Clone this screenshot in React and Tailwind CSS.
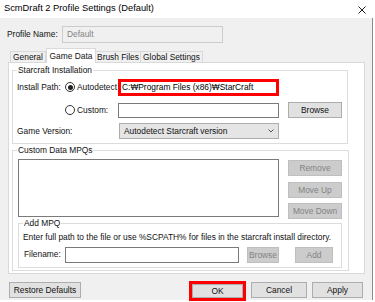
import React from 'react';

const Btn = ({ children, className = '', disabled }) => (
  <div
    className={`flex items-center justify-center h-[16px] border whitespace-nowrap ${
      disabled ? 'bg-[#cccccc] border-[#bfbfbf] text-[#838383]' : 'bg-[#e1e1e1] border-[#adadad]'
    } ${className}`}
  >
    {children}
  </div>
);

const Radio = ({ checked }) => (
  <span className="w-[10px] h-[10px] rounded-full border border-[#333] bg-white flex items-center justify-center shrink-0">
    {checked && <span className="w-[5px] h-[5px] rounded-full bg-[#222]" />}
  </span>
);

const Group = ({ label, className = '', children }) => (
  <fieldset className={`border border-[#dcdcdc] ${className}`}>
    <legend className="ml-[4px] px-[1px] leading-[12px]">{label}</legend>
    {children}
  </fieldset>
);

export default function App() {
  return (
    <div className="w-[375px] h-[302px] bg-white overflow-hidden whitespace-nowrap font-['Liberation_Sans',Arial,sans-serif] text-[8.4px] text-[#111]">
      {/* title bar */}
      <div className="h-[18px] flex items-center justify-between pl-[4px] pr-[9px]">
        <span className="text-[9.3px] text-black">ScmDraft 2 Profile Settings (Default)</span>
        <svg width="8" height="8" viewBox="0 0 8 8" className="mt-[2px]">
          <path d="M0.5 0.5L7.5 7.5M7.5 0.5L0.5 7.5" stroke="#222" strokeWidth="1" />
        </svg>
      </div>

      <div className="w-[373px] h-[282px] bg-[#f0f0f0] border-r border-[#8c8c8c] pt-[8px]">
        {/* profile name */}
        <div className="flex items-center h-[17px] pl-[7px]">
          <span className="w-[55px]">Profile Name:</span>
          <div className="w-[161px] h-[17px] border border-[#cccccc] bg-[#f0f0f0] text-[#838383] flex items-center pl-[4px]">
            Default
          </div>
        </div>

        {/* tabs */}
        <div className="flex items-end h-[14px] mt-[5px] pl-[10px]">
          <div className="w-[36px] h-[11px] border border-b-0 border-[#d9d9d9] bg-[#f0f0f0] flex items-center justify-center">General</div>
          <div className="relative z-10 w-[50px] h-[15px] -mb-px border border-b-0 border-[#d9d9d9] bg-white flex items-start justify-center pt-[1px]">Game Data</div>
          <div className="w-[45px] h-[11px] border border-b-0 border-l-0 border-[#d9d9d9] bg-[#f0f0f0] flex items-center justify-center">Brush Files</div>
          <div className="w-[62px] h-[11px] border border-b-0 border-l-0 border-[#d9d9d9] bg-[#f0f0f0] flex items-center justify-center">Global Settings</div>
        </div>

        {/* tab panel */}
        <div className="ml-[8px] w-[357px] h-[212px] border border-[#d9d9d9] bg-white pl-[3px]">
          <Group label="Starcraft Installation" className="w-[336px] h-[80px] mt-[1px]">
            <div className="flex items-center h-[17px] mt-[3px]">
              <span className="w-[52px] pl-[4px]">Install Path:</span>
              <span className="w-[53px] flex items-center gap-[2px]">
                <Radio checked />
                Autodetect
              </span>
              <div className="w-[161px] h-[17px] border-[3px] border-[#ff0000] flex items-center pl-[1px] text-black">
                C:₩Program Files (x86)₩StarCraft
              </div>
            </div>
            <div className="flex items-center h-[16px] mt-[6px]">
              <span className="w-[52px]" />
              <span className="w-[53px] flex items-center gap-[2px]">
                <Radio />
                Custom:
              </span>
              <div className="w-[161px] h-[15px] border border-[#7a7a7a] bg-white" />
              <Btn className="ml-[9px] w-[54px]">Browse</Btn>
            </div>
            <div className="flex items-center h-[16px] mt-[5px]">
              <span className="w-[106px] pl-[4px]">Game Version:</span>
              <div className="w-[160px] h-[16px] border border-[#adadad] bg-[#e5e5e5] flex items-center justify-between pl-[4px] pr-[4px]">
                Autodetect Starcraft version
                <svg width="6" height="4" viewBox="0 0 6 4">
                  <path d="M0.5 0.5L3 3L5.5 0.5" fill="none" stroke="#555" strokeWidth="1" />
                </svg>
              </div>
            </div>
          </Group>

          <Group label="Custom Data MPQs" className="w-[337px] h-[127px]">
            <div className="flex items-start h-[58px] mt-[3px]">
              <div className="ml-[5px] w-[261px] h-[58px] border border-[#7a7a7a] bg-white shrink-0" />
              <div className="ml-[9px] mt-[1px] w-[54px] flex flex-col">
                <Btn disabled>Remove</Btn>
                <Btn disabled className="mt-[6px]">Move Up</Btn>
                <Btn disabled className="mt-[5px]">Move Down</Btn>
              </div>
            </div>
            <Group label="Add MPQ" className="ml-[5px] w-[324px] h-[51px]">
              <div className="mt-[2px] pl-[4px] leading-[12px]">
                Enter full path to the file or use %SCPATH% for files in the starcraft install directory.
              </div>
              <div className="flex items-start h-[16px] mt-[4px]">
                <span className="ml-[5px] w-[41px] leading-[14px]">Filename:</span>
                <div className="w-[174px] h-[16px] border border-[#7a7a7a] bg-white" />
                <Btn disabled className="ml-[8px] w-[32px] h-[15px]">Browse</Btn>
                <Btn disabled className="ml-[16px] w-[38px] h-[15px]">Add</Btn>
              </div>
            </Group>
          </Group>
        </div>

        {/* dialog buttons */}
        <div className="flex items-start mt-[7px]">
          <Btn className="ml-[9px] mt-[1px] w-[72px]">Restore Defaults</Btn>
          <div className="ml-[108px] w-[57px] h-[20px] border-[3px] border-[#ff0000]">
            <div className="w-full h-full bg-[#e1e1e1] border border-[#adadad] flex items-center justify-center">OK</div>
          </div>
          <Btn className="ml-[5px] mt-[1px] w-[56px]">Cancel</Btn>
          <Btn className="ml-[5px] mt-[1px] w-[51px]">Apply</Btn>
        </div>
      </div>
    </div>
  );
}
